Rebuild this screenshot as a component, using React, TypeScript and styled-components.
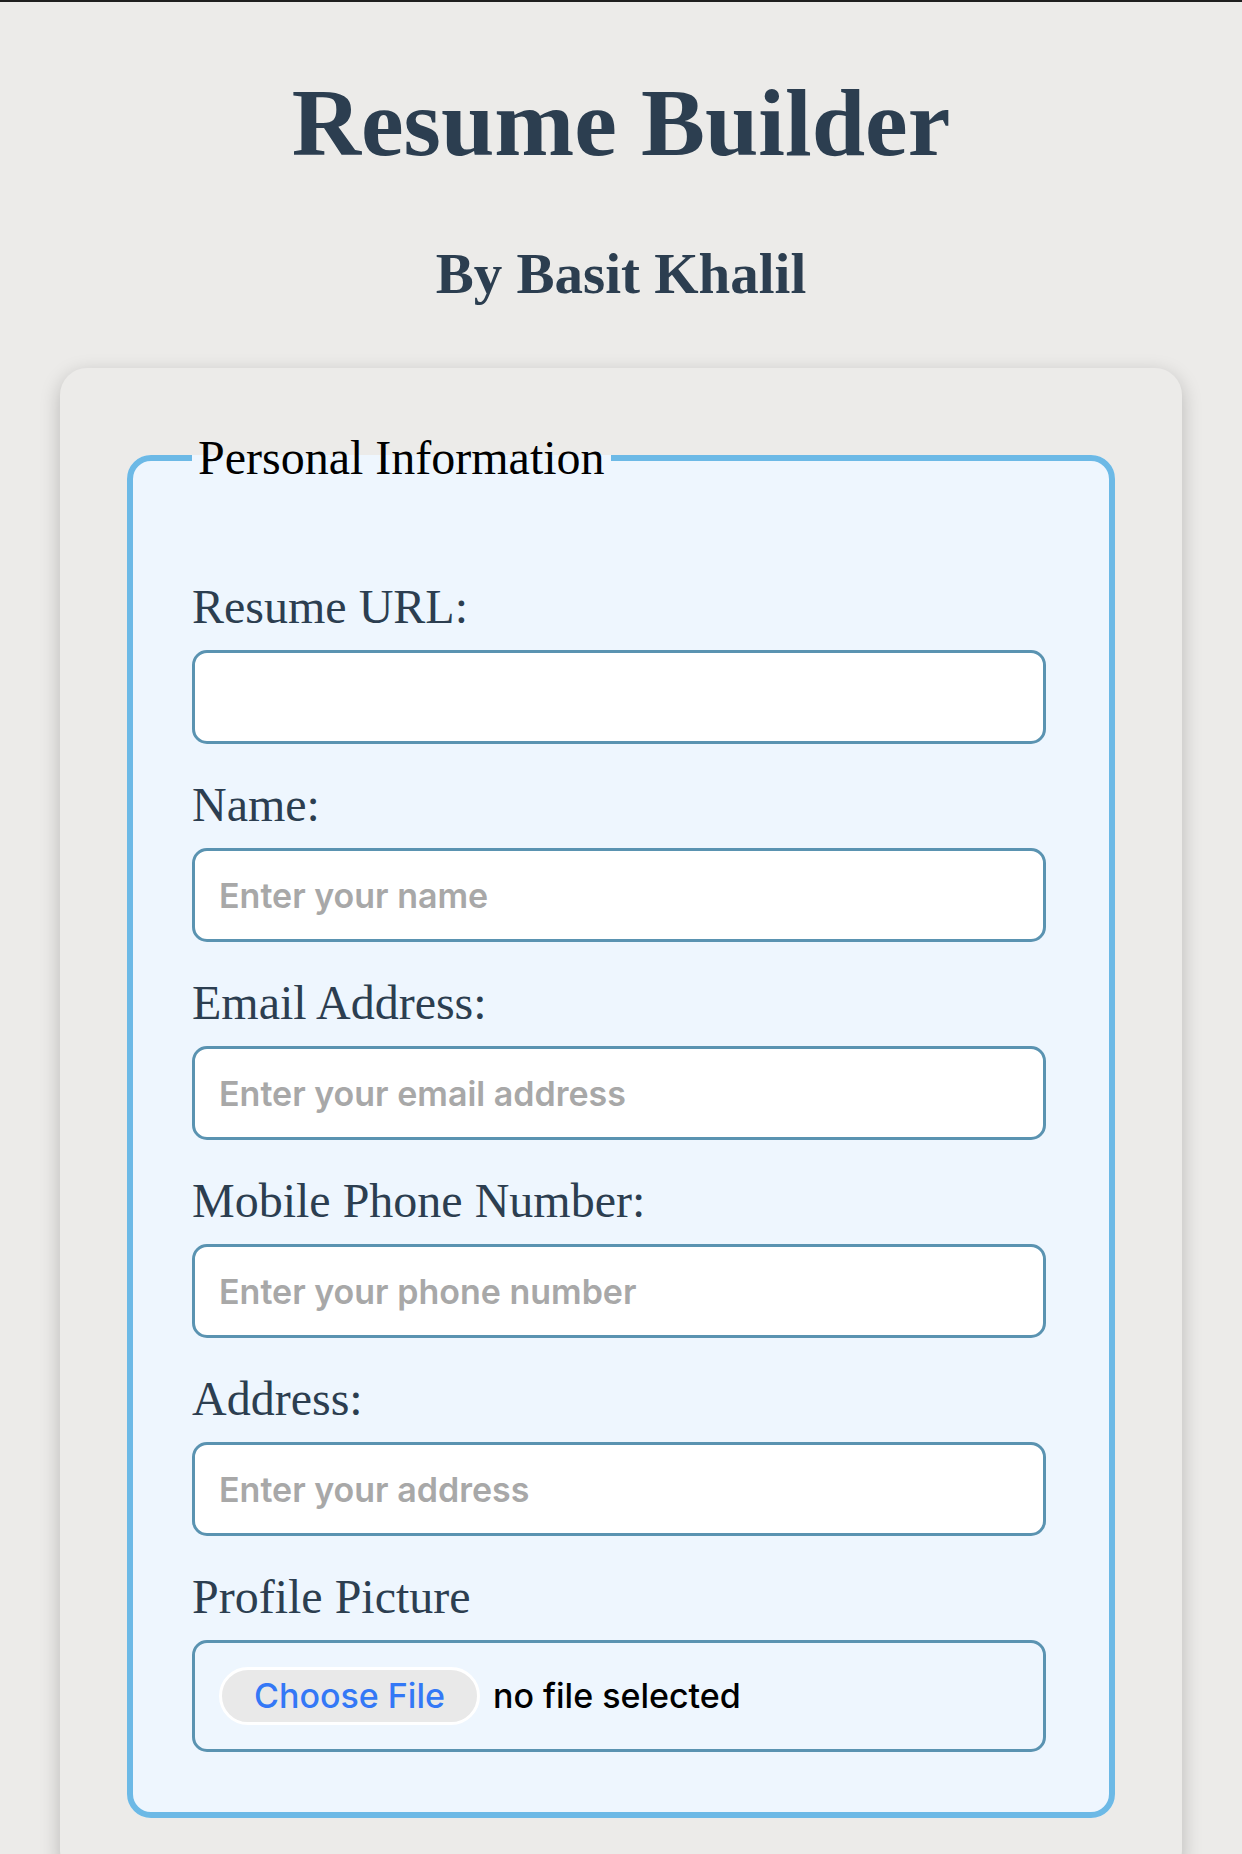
import React from "react";
import styled, { createGlobalStyle } from "styled-components";

const GlobalStyle = createGlobalStyle`
  html, body {
    margin: 0;
    padding: 0;
    background: #ecebe9;
  }
  body {
    border-top: 2px solid #1f1f1f;
    font-family: "Liberation Serif", "Times New Roman", serif;
  }
  * { box-sizing: border-box; }
`;

const Page = styled.main`
  padding-top: 66px;
`;

const Title = styled.h1`
  margin: 0;
  text-align: center;
  font: 700 96px/110px "Liberation Serif", "Times New Roman", serif;
  color: #2c3e50;
`;

const Byline = styled.h3`
  margin: 64px 0 62px;
  text-align: center;
  font: 700 57px/64px "Liberation Serif", "Times New Roman", serif;
  color: #2c3e50;
`;

const Card = styled.section`
  margin: 0 60px;
  padding: 63px 67px 60px;
  background: #ecebe9;
  border-radius: 27px;
  box-shadow: 0 6px 20px rgba(0, 0, 0, 0.22);
`;

const Fieldset = styled.fieldset`
  margin: 0;
  min-width: 0;
  padding: 96px 63px 60px 59px;
  border: 6px solid #6cb9e6;
  border-radius: 24px;
  background: #eef6fe;
`;

const Legend = styled.legend`
  padding: 0 6px;
  font: 400 48px/53px "Liberation Serif", "Times New Roman", serif;
  color: #000;
`;

const Label = styled.label`
  display: block;
  margin-bottom: 17px;
  font: 400 48px/53px "Liberation Serif", "Times New Roman", serif;
  color: #2c3e50;
`;

const TextInput = styled.input`
  display: block;
  width: 100%;
  height: 94px;
  margin: 0 0 34px;
  padding: 0 24px;
  border: 3px solid #5a93b1;
  border-radius: 15px;
  background: #fff;
  font: 600 34px/40px Inter, "Noto Sans", sans-serif;
  color: #222;
  outline: none;
  &::placeholder {
    color: #a8a8a8;
  }
`;

const FileBox = styled.label`
  display: flex;
  align-items: center;
  gap: 13px;
  padding: 24px;
  border: 3px solid #5a93b1;
  border-radius: 15px;
  cursor: pointer;
`;

const HiddenInput = styled.input`
  position: absolute;
  width: 1px;
  height: 1px;
  opacity: 0;
  pointer-events: none;
`;

const ChooseButton = styled.span`
  display: inline-flex;
  align-items: center;
  height: 58px;
  padding: 0 32px;
  border: 3px solid #ffffff;
  border-radius: 29px;
  background: #e9e9e9;
  font: 500 34px/1 Inter, "Noto Sans", sans-serif;
  color: #3478f6;
`;

const FileStatus = styled.span`
  font: 500 34px/1 Inter, "Noto Sans", sans-serif;
  color: #000;
`;

const fields = [
  { id: "resumeUrl", label: "Resume URL:", placeholder: "", type: "text" },
  { id: "name", label: "Name:", placeholder: "Enter your name", type: "text" },
  { id: "email", label: "Email Address:", placeholder: "Enter your email address", type: "email" },
  { id: "phone", label: "Mobile Phone Number:", placeholder: "Enter your phone number", type: "tel" },
  { id: "address", label: "Address:", placeholder: "Enter your address", type: "text" },
];

export default function App() {
  return (
    <>
      <GlobalStyle />
      <Page>
        <Title>Resume Builder</Title>
        <Byline>By Basit Khalil</Byline>
        <Card>
          <Fieldset>
            <Legend>Personal Information</Legend>
            {fields.map((f) => (
              <React.Fragment key={f.id}>
                <Label htmlFor={f.id}>{f.label}</Label>
                <TextInput id={f.id} type={f.type} placeholder={f.placeholder} />
              </React.Fragment>
            ))}
            <Label htmlFor="profilePicture">Profile Picture</Label>
            <FileBox>
              <HiddenInput id="profilePicture" type="file" accept="image/*" />
              <ChooseButton>Choose File</ChooseButton>
              <FileStatus>no file selected</FileStatus>
            </FileBox>
          </Fieldset>
        </Card>
      </Page>
    </>
  );
}
